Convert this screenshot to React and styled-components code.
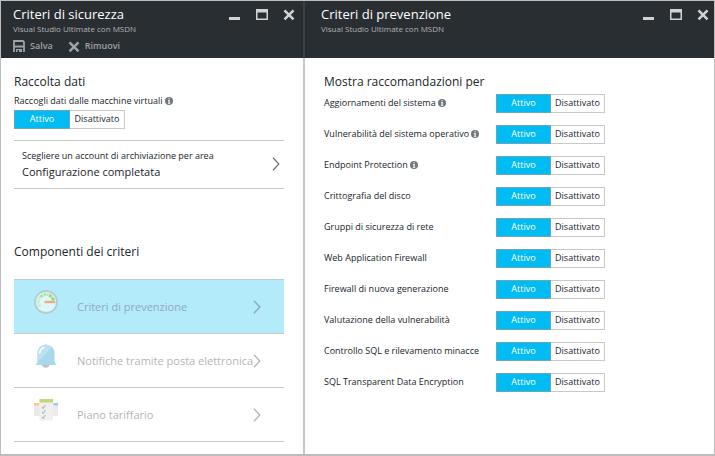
import React, { useId, useState } from "react";
import styled, { createGlobalStyle } from "styled-components";

const GlobalStyle = createGlobalStyle`
  *, *::before, *::after { box-sizing: border-box; }
  body {
    margin: 0;
    background: #fff;
    color: #20262b;
    font-family: "Open Sans", "Noto Sans", sans-serif;
    font-size: 9px;
  }
  h1, h2, p, ul { margin: 0; padding: 0; font-weight: 400; }
  ul { list-style: none; }
  button {
    margin: 0;
    padding: 0;
    border: 0;
    background: none;
    color: inherit;
    font: inherit;
    cursor: pointer;
  }
  svg { display: block; flex: none; }
`;

const Portal = styled.main`
  display: grid;
  grid-template-columns: 304fr 409fr;
  min-height: 100vh;
  border: 1px solid #bdbdbd;
  border-bottom-width: 2px;
`;

const Blade = styled.section`
  display: flex;
  flex-direction: column;
  min-width: 0;
`;

const BladeHeader = styled.header`
  height: 57px;
  padding: 4px ${(p) => p.$right}px 0 ${(p) => p.$left}px;
  background: #292e32;
  border-right: ${(p) => (p.$divided ? "2px solid #3b4044" : "0")};
`;

const BladeBody = styled.div`
  flex: 1;
  padding: 13px ${(p) => p.$right}px 12px ${(p) => p.$left}px;
  border-right: ${(p) => (p.$divided ? "2px solid #c8c8c8" : "0")};
`;

const TitleBar = styled.div`
  display: flex;
  justify-content: space-between;
  align-items: flex-start;
`;

const BladeTitle = styled.h1`
  color: #fff;
  font-size: 13px;
  line-height: 18px;
  white-space: nowrap;
`;

const BladeSubtitle = styled.p`
  color: #b0b3b5;
  font-size: 8px;
  line-height: 12px;
  white-space: nowrap;
`;

const WindowButtons = styled.div`
  display: flex;
  gap: 15px;
  padding-top: 2px;
  color: #d0d2d3;
`;

const CommandBar = styled.div`
  display: flex;
  gap: 15px;
  padding-top: 2px;
`;

const Command = styled.button`
  display: flex;
  align-items: center;
  gap: 5px;
  height: 17px;
  color: #a0a3a5;
  font-size: 9px;
  font-weight: 600;
`;

const SectionTitle = styled.h2`
  font-size: 12px;
  line-height: 21px;
  white-space: nowrap;
`;

const Label = styled.div`
  display: flex;
  align-items: center;
  gap: 2px;
  line-height: 18px;
  font-weight: 500;
  white-space: nowrap;
`;

const ToggleGroup = styled.div`
  display: grid;
  grid-template-columns: ${(p) => (p.$wide ? 56 : 55)}px 1fr;
  flex: none;
  width: ${(p) => (p.$wide ? 111 : 109)}px;
  height: 19px;
`;

const ToggleButton = styled.button`
  padding-bottom: 2px;
  border: 1px solid ${(p) => (p.$on ? "#6ba6ba" : "#c8c8c8")};
  background: ${(p) => (p.$on ? "#00bcf2" : "#fff")};
  color: ${(p) => (p.$on ? "#fff" : "#20262b")};
  font-weight: 500;
  line-height: 15px;

  & + & { border-left: 0; }
`;

const AccountButton = styled.button`
  display: flex;
  align-items: center;
  justify-content: space-between;
  width: 100%;
  height: 49px;
  margin: 11px 0 52px;
  padding: 0 4px 2px 8px;
  border: solid #c8c8c8;
  border-width: 1px 0;
  text-align: left;
  white-space: nowrap;
`;

const AccountHint = styled.span`
  display: block;
  font-weight: 500;
  line-height: 16px;
`;

const AccountValue = styled.span`
  display: block;
  font-size: 11px;
  line-height: 16px;
`;

const ComponentList = styled.ul`
  margin-top: 17px;
  border-top: 1px solid #c8c8c8;
`;

const ComponentButton = styled.button`
  display: grid;
  grid-template-columns: 24px minmax(0, 1fr) 8px;
  column-gap: 19px;
  align-items: center;
  width: 100%;
  height: 54px;
  padding: 0 23px 0 20px;
  border-bottom: 1px solid #c8c8c8;
  background: ${(p) => (p.$selected ? "#b3ebfb" : "#fff")};
  color: ${(p) => (p.$selected ? "#94a7bd" : "#b5b5b5")};
  font-size: 11px;
  text-align: left;
  white-space: nowrap;

  & > svg:first-child { margin-bottom: 10px; }
`;

const RecommendationList = styled.ul`
  margin-top: 2px;
`;

const Recommendation = styled.li`
  display: flex;
  align-items: flex-start;
  height: 31px;
`;

const RecommendationName = styled.div`
  flex: none;
  width: 172px;
`;

function MinimizeIcon() {
  return (
    <svg width="12" height="14" viewBox="0 0 12 14">
      <path d="M0 10h11v3H0z" fill="currentColor" />
    </svg>
  );
}

function MaximizeIcon() {
  return (
    <svg width="12" height="14" viewBox="0 0 12 14">
      <path fillRule="evenodd" d="M0 2h12v11H0zM1.500 5.500v6h9v-6z" fill="currentColor" />
    </svg>
  );
}

function CloseIcon() {
  return (
    <svg width="12" height="14" viewBox="0 0 12 14">
      <path d="M1.500 3.300l9 9M10.500 3.300l-9 9" stroke="currentColor" strokeWidth="2.600" />
    </svg>
  );
}

function SaveIcon() {
  return (
    <svg width="12" height="12" viewBox="0 0 12 12">
      <path d="M1 12V1h9l1 1v10M1 6.500h10" fill="none" stroke="currentColor" strokeWidth="1.800" />
      <path fillRule="evenodd" d="M3 9h6v3H3zM4.500 10v2H6v-2z" fill="currentColor" />
    </svg>
  );
}

function InfoIcon() {
  return (
    <svg width="8" height="8" viewBox="0 0 8 8" role="img" aria-label="Informazioni">
      <circle cx="4" cy="4" r="4" fill="#74787c" />
      <path d="M3.500 1.200h1.200v1.100H3.500zM3 3.100h1.700v2.800h.6v.8H2.900v-.8h.6V3.800H3z" fill="#fff" />
    </svg>
  );
}

function ChevronIcon({ color }) {
  return (
    <svg width="8" height="14" viewBox="0 0 8 14">
      <path d="M1 .8l5.800 6.200L1 13.200" fill="none" stroke={color} strokeWidth="1.300" />
    </svg>
  );
}

function GaugeIcon() {
  return (
    <svg width="24" height="24" viewBox="0 0 24 24">
      <circle cx="12" cy="12" r="11" fill="#e0f7fa" stroke="#b2cdd3" strokeWidth="1.800" />
      <path d="M6 17a7.500 7.500 0 0 1 0-9.500" fill="none" stroke="#c9efcb" strokeWidth="3" strokeDasharray="3 .8" />
      <path d="M6.300 7.200a7.500 7.500 0 0 1 8-2.300" fill="none" stroke="#b2e5a5" strokeWidth="3" strokeDasharray="3 .8" />
      <path d="M15 5.200a7.500 7.500 0 0 1 4.400 5.300" fill="none" stroke="#96d77f" strokeWidth="3" strokeDasharray="3.200 .7" />
      <path d="M10.500 10.800h10.800v2.400H10.500z" fill="#dfb27e" />
    </svg>
  );
}

function BellIcon() {
  return (
    <svg width="24" height="24" viewBox="0 0 24 24">
      <path d="M8 20h7.500a3.700 3.700 0 0 1-7.500 0z" fill="#bfc0c3" />
      <path d="M9.500 1.200a5 5 0 0 1 5 0c4 .9 6 3.900 6 8v7.300c0 1.700.5 2.600 1.500 3.500v1H2v-1c1-.9 1.500-1.800 1.500-3.500V9.200c0-4.100 2-7.100 6-8z" fill="#a9d7eb" />
      <path d="M9.500 1.200a5 5 0 0 1 5 0c1.600.4 2.900 1.100 3.800 2.100L3.500 18V9.200c0-4.100 2-7.100 6-8z" fill="#bde1f0" />
      <path d="M5.700 9C6 6.400 7.300 4.500 9.700 3.500" fill="none" stroke="#fff" strokeWidth="1.700" strokeLinecap="round" />
    </svg>
  );
}

function PricingIcon() {
  return (
    <svg width="24" height="24" viewBox="0 0 24 24">
      <path d="M0 5h6v13H0zM18 5h6v13h-6z" fill="#ebebeb" />
      <path d="M0 5h5.500v2.500H0z" fill="#fbcf79" />
      <path d="M19.500 5H24v2.500h-4.500z" fill="#94cbe5" />
      <path d="M5.500 1H19v21.500H5.500z" fill="#f0f0f0" />
      <path d="M5.500 1H19v3.500H5.500z" fill="#bedb7b" />
      <path d="M8 9l1.200 1.300L11.500 7M8 14l1.200 1.300 2.300-3.300M8 19l1.200 1.300 2.300-3.300" fill="none" stroke="#b9b9b9" strokeWidth="1.200" />
    </svg>
  );
}

function Toggle({ labelledBy, wide }) {
  const [on, setOn] = useState(true);
  return (
    <ToggleGroup role="group" aria-labelledby={labelledBy} $wide={wide}>
      <ToggleButton type="button" $on={on} aria-pressed={on} onClick={() => setOn(true)}>
        Attivo
      </ToggleButton>
      <ToggleButton type="button" $on={!on} aria-pressed={!on} onClick={() => setOn(false)}>
        Disattivato
      </ToggleButton>
    </ToggleGroup>
  );
}

function BladeTitleBar({ title }) {
  return (
    <TitleBar>
      <div>
        <BladeTitle>{title}</BladeTitle>
        <BladeSubtitle>Visual Studio Ultimate con MSDN</BladeSubtitle>
      </div>
      <WindowButtons>
        <button type="button" aria-label="Riduci a icona"><MinimizeIcon /></button>
        <button type="button" aria-label="Ingrandisci"><MaximizeIcon /></button>
        <button type="button" aria-label="Chiudi"><CloseIcon /></button>
      </WindowButtons>
    </TitleBar>
  );
}

function RecommendationRow({ name, info }) {
  const id = useId();
  return (
    <Recommendation>
      <RecommendationName>
        <Label>
          <span id={id}>{name}</span>
          {info && <InfoIcon />}
        </Label>
      </RecommendationName>
      <Toggle labelledBy={id} />
    </Recommendation>
  );
}

const policyComponents = [
  { name: "Criteri di prevenzione", Icon: GaugeIcon, selected: true },
  { name: "Notifiche tramite posta elettronica", Icon: BellIcon },
  { name: "Piano tariffario", Icon: PricingIcon },
];

const recommendations = [
  { name: "Aggiornamenti del sistema", info: true },
  { name: "Vulnerabilità del sistema operativo", info: true },
  { name: "Endpoint Protection", info: true },
  { name: "Crittografia del disco" },
  { name: "Gruppi di sicurezza di rete" },
  { name: "Web Application Firewall" },
  { name: "Firewall di nuova generazione" },
  { name: "Valutazione della vulnerabilità" },
  { name: "Controllo SQL e rilevamento minacce" },
  { name: "SQL Transparent Data Encryption" },
];

export default function App() {
  return (
    <>
      <GlobalStyle />
      <Portal>
        <Blade>
          <BladeHeader $left={12} $right={8} $divided>
            <BladeTitleBar title="Criteri di sicurezza" />
            <CommandBar>
              <Command type="button"><SaveIcon />Salva</Command>
              <Command type="button"><CloseIcon />Rimuovi</Command>
            </CommandBar>
          </BladeHeader>
          <BladeBody $left={13} $right={19} $divided>
            <SectionTitle>Raccolta dati</SectionTitle>
            <Label>
              <span id="raccolta">Raccogli dati dalle macchine virtuali</span>
              <InfoIcon />
            </Label>
            <Toggle labelledBy="raccolta" wide />
            <AccountButton type="button">
              <span>
                <AccountHint>Scegliere un account di archiviazione per area</AccountHint>
                <AccountValue>Configurazione completata</AccountValue>
              </span>
              <ChevronIcon color="#777" />
            </AccountButton>
            <SectionTitle>Componenti dei criteri</SectionTitle>
            <ComponentList>
              {policyComponents.map(({ name, Icon, selected }) => (
                <li key={name}>
                  <ComponentButton type="button" $selected={selected}>
                    <Icon />
                    <span>{name}</span>
                    <ChevronIcon color={selected ? "#85a9b8" : "#b5b5b5"} />
                  </ComponentButton>
                </li>
              ))}
            </ComponentList>
          </BladeBody>
        </Blade>
        <Blade>
          <BladeHeader $left={16} $right={5}>
            <BladeTitleBar title="Criteri di prevenzione" />
          </BladeHeader>
          <BladeBody $left={19} $right={19}>
            <SectionTitle>Mostra raccomandazioni per</SectionTitle>
            <RecommendationList>
              {recommendations.map((item) => (
                <RecommendationRow key={item.name} {...item} />
              ))}
            </RecommendationList>
          </BladeBody>
        </Blade>
      </Portal>
    </>
  );
}
